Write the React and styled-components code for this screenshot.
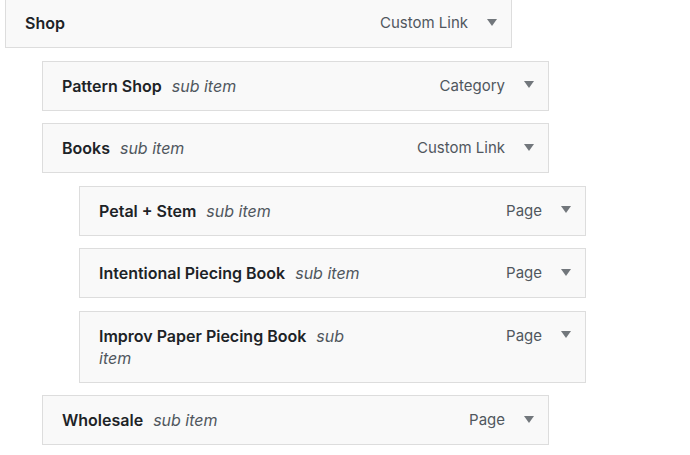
import React from 'react';
import styled, { createGlobalStyle } from 'styled-components';

const GlobalStyle = createGlobalStyle`
	html, body {
		margin: 0;
		padding: 0;
		background: #ffffff;
	}
	body {
		font-family: Inter, "Noto Sans", "Liberation Sans", sans-serif;
		-webkit-font-smoothing: antialiased;
	}
`;

const MENU = [
	{ title: 'Shop', type: 'Custom Link', depth: 0 },
	{ title: 'Pattern Shop', type: 'Category', depth: 1, sub: true },
	{ title: 'Books', type: 'Custom Link', depth: 1, sub: true },
	{ title: 'Petal + Stem', type: 'Page', depth: 2, sub: true },
	{ title: 'Intentional Piecing Book', type: 'Page', depth: 2, sub: true },
	{ title: 'Improv Paper Piecing Book', type: 'Page', depth: 2, sub: true },
	{ title: 'Wholesale', type: 'Page', depth: 1, sub: true },
];

function Arrow() {
	return (
		<ArrowIcon viewBox="0 0 10 7" aria-hidden="true">
			<path d="M0 0 H10 L5 7 Z" fill="currentColor" />
		</ArrowIcon>
	);
}

export default function App() {
	return (
		<>
			<GlobalStyle />
			<MenuList>
				{MENU.map((item) => (
					<MenuItem key={item.title} $depth={item.depth}>
						<Handle>
							<ItemTitle>
								<TitleText>{item.title}</TitleText>
								{item.sub && <SubLabel>sub item</SubLabel>}
							</ItemTitle>
							<Controls>
								<ItemType>{item.type}</ItemType>
								<Arrow />
							</Controls>
						</Handle>
					</MenuItem>
				))}
			</MenuList>
		</>
	);
}

const MenuList = styled.ul`
	list-style: none;
	margin: -2px 0 0;
	padding: 0 0 0 5px;
	display: flex;
	flex-direction: column;
	gap: 12.5px;
`;

// each nesting level shifts the row right
const MenuItem = styled.li`
	margin-left: ${(p) => p.$depth * 37}px;
	width: 507px;
`;

const Handle = styled.div`
	box-sizing: border-box;
	display: flex;
	align-items: flex-start;
	justify-content: space-between;
	padding: 13px 14px 13px 19px;
	background: #f9f9f9;
	border: 1px solid #dddddd;
`;

// long titles wrap before reaching the type label
const ItemTitle = styled.div`
	max-width: 270px;
	font-size: 16px;
	line-height: 22px;
	color: #1d2327;
`;

const TitleText = styled.span`
	font-weight: 600;
	margin-right: 10px;
`;

const SubLabel = styled.span`
	font-style: italic;
	color: #50575e;
`;

const Controls = styled.div`
	display: flex;
	align-items: center;
	gap: 19px;
	height: 22px;
`;

const ItemType = styled.span`
	font-size: 15px;
	line-height: 22px;
	color: #50575e;
`;

const ArrowIcon = styled.svg`
	width: 10px;
	height: 7px;
	margin-top: -2px;
	color: #72777c;
	display: block;
`;
